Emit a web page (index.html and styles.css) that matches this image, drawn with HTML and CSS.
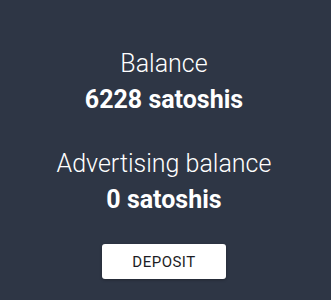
FILE: index.html
```html
<!DOCTYPE html>
<html lang="en">
<head>
    <meta charset="UTF-8">
    <title>Balance</title>
    <link rel="stylesheet" href="styles.css">
</head>
<body>
    <div class="balance-card">
        <div class="balance-block">
            <div class="balance-label">Balance</div>
            <div class="balance-value">6228 satoshis</div>
        </div>
        <div class="balance-block">
            <div class="balance-label">Advertising balance</div>
            <div class="balance-value">0 satoshis</div>
        </div>
        <button class="deposit-button">DEPOSIT</button>
    </div>
</body>
</html>
```

FILE: styles.css
```css
/* Basic reset */
* {
    margin: 0;
    padding: 0;
    box-sizing: border-box;
    font-family: Roboto, "Liberation Sans", sans-serif;
}

body {
    background-color: #2e3645;
    width: 331px;
    height: 300px;
    overflow: hidden;
}

/* Card with the balances */
.balance-card {
    width: 328px;
    display: flex;
    flex-direction: column;
    align-items: center;
    padding-top: 46px;
    color: #ffffff;
    text-align: center;
}

.balance-block {
    margin-bottom: 28px;
}

.balance-label {
    font-size: 25px;
    font-weight: 300;
    line-height: 36px;
}

.balance-value {
    font-size: 25px;
    font-weight: 700;
    line-height: 36px;
}

/* Deposit button */
.deposit-button {
    width: 124px;
    height: 35px;
    margin-top: -2px;
    background-color: #ffffff;
    color: #1c1c24;
    border: none;
    border-radius: 3px;
    font-size: 15px;
    font-weight: 400;
    letter-spacing: 0.5px;
    box-shadow: 0 1px 3px rgba(0, 0, 0, 0.3);
    cursor: pointer;
}
```
